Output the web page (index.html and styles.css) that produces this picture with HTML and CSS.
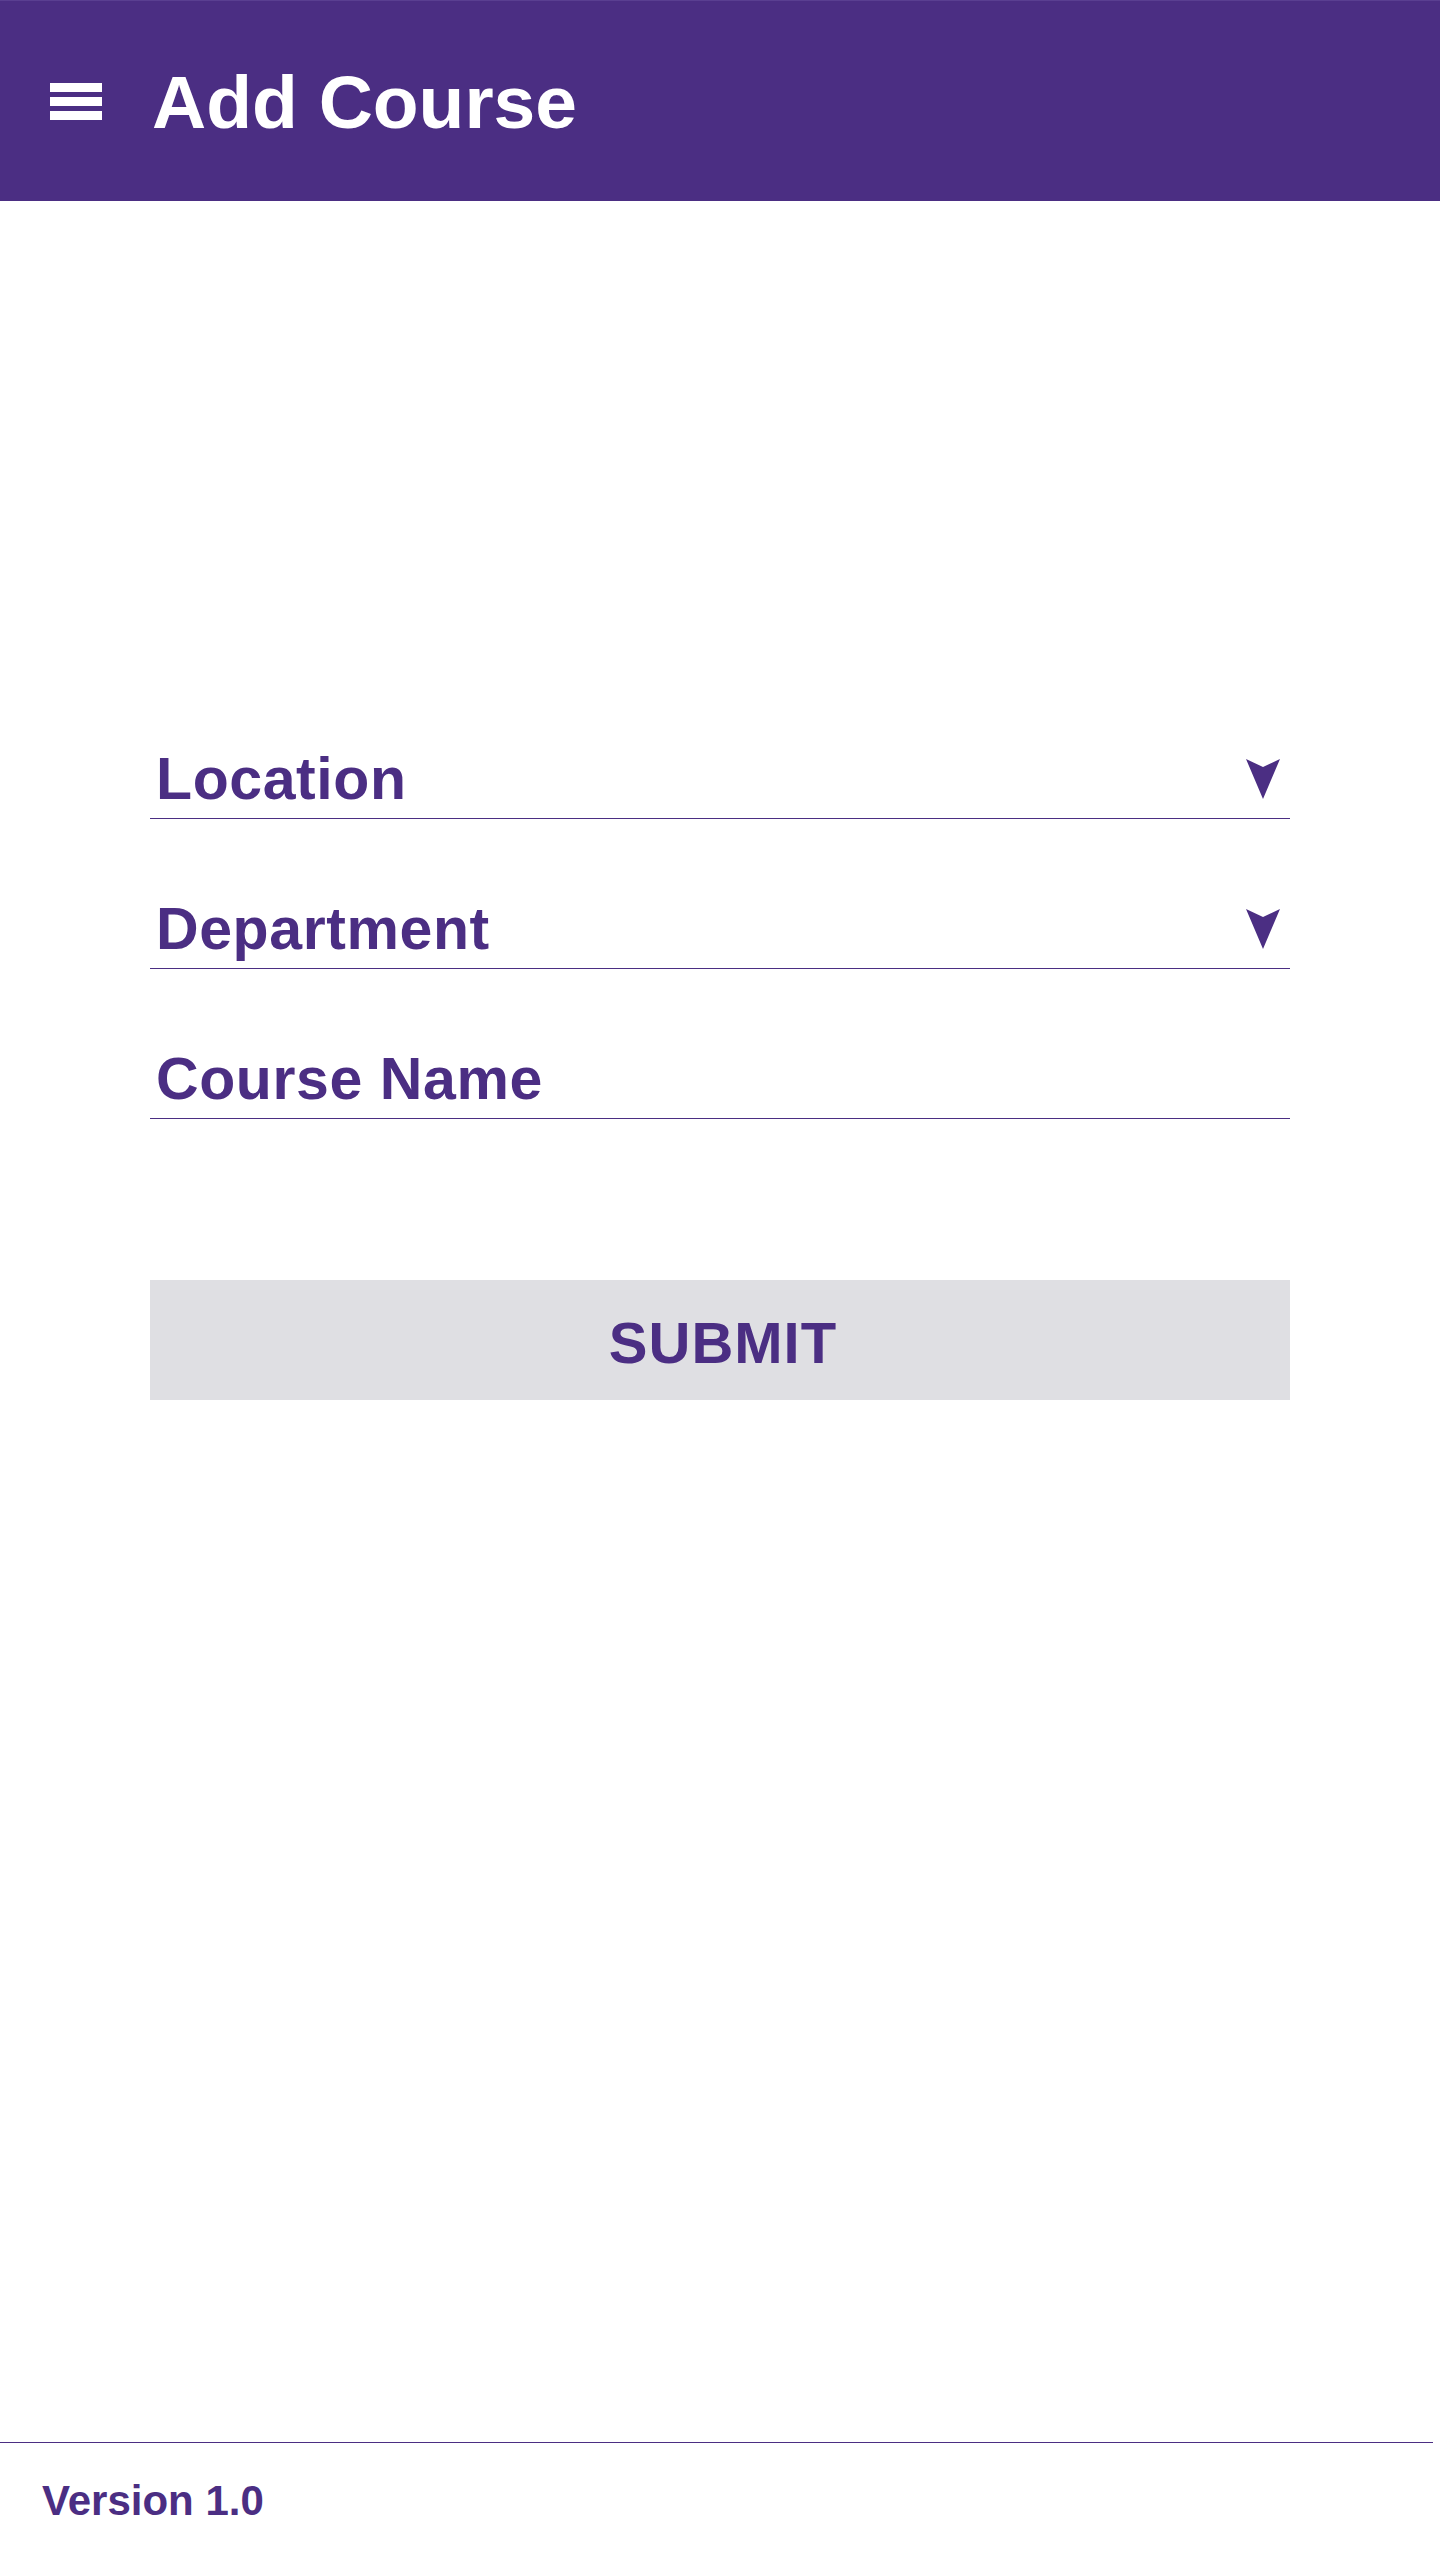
FILE: index.html
```html
<!DOCTYPE html>
<html lang="en">
<head>
<meta charset="utf-8">
<title>Add Course</title>
<link rel="stylesheet" href="styles.css">
</head>
<body>
<div class="page">
  <header class="appbar">
    <div class="menu" aria-label="Menu">
      <span class="bar"></span>
      <span class="bar"></span>
      <span class="bar"></span>
    </div>
    <h1 class="title">Add Course</h1>
  </header>

  <main class="content">
    <form class="form">
      <div class="field">
        <span class="label">Location</span>
        <svg class="caret" width="34" height="40" viewBox="0 0 34 40"><polygon points="0,0 17,8 34,0 17,40" fill="#4b2e83"/></svg>
      </div>
      <div class="field">
        <span class="label">Department</span>
        <svg class="caret" width="34" height="40" viewBox="0 0 34 40"><polygon points="0,0 17,8 34,0 17,40" fill="#4b2e83"/></svg>
      </div>
      <div class="field">
        <span class="label">Course Name</span>
      </div>
      <button type="button" class="submit">SUBMIT</button>
    </form>
  </main>

  <footer class="footer">
    <span class="version">Version 1.0</span>
  </footer>
</div>
</body>
</html>
```

FILE: styles.css
```css
html, body {
  margin: 0;
  padding: 0;
  background: #ffffff;
}

body {
  font-family: "Liberation Sans", Arial, sans-serif;
  font-weight: bold;
  color: #4b2e83;
}

.page {
  display: flex;
  flex-direction: column;
  min-height: 100vh;
}

.appbar {
  box-sizing: border-box;
  height: 201px;
  background: #4b2e83;
  border-top: 1px solid #5a3f91;
  display: flex;
  align-items: center;
  padding-left: 50px;
  gap: 50px;
}

.menu {
  display: flex;
  flex-direction: column;
  gap: 5px;
  width: 52px;
}

.bar {
  display: block;
  height: 9px;
  background: #ffffff;
}

.title {
  margin: 2px 0 0 0;
  font-size: 75px;
  line-height: 1;
  font-weight: bold;
  color: #ffffff;
}

.content {
  flex: 1;
  padding: 545px 0 0 150px;
}

.form {
  width: 1140px;
  display: flex;
  flex-direction: column;
}

.field {
  display: flex;
  align-items: center;
  justify-content: space-between;
  padding: 0 10px 6px 6px;
  border-bottom: 1px solid #4b2e83;
  margin-bottom: 77px;
}

.field:last-of-type {
  margin-bottom: 161px;
}

.label {
  font-size: 59px;
  line-height: 66px;
  letter-spacing: 0.6px;
}

.caret {
  display: block;
}

.submit {
  box-sizing: border-box;
  height: 120px;
  width: 100%;
  border: none;
  border-radius: 0;
  background: #dfdfe3;
  color: #4b2e83;
  font-family: "Liberation Sans", Arial, sans-serif;
  font-weight: bold;
  font-size: 58px;
  line-height: 1;
  letter-spacing: 1px;
  padding: 6px 0 0 6px;
  cursor: pointer;
}

.footer {
  box-sizing: border-box;
  width: 1433px;
  border-top: 1px solid #4b2e83;
  padding: 37px 0 38px 42px;
}

.version {
  display: block;
  font-size: 42px;
  line-height: 42px;
}
```
